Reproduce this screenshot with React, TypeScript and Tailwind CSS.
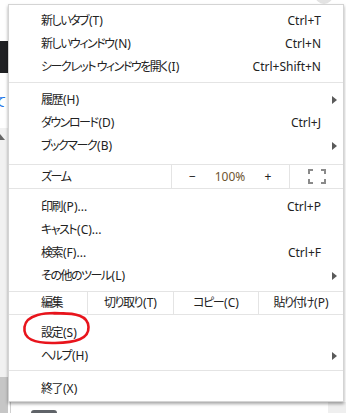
import React from "react";

const font = "[font-family:'Noto_Sans','Noto_Sans_CJK_JP',sans-serif] [font-feature-settings:'palt']";

// kana/kanji part gets tightened, the "(X)" mnemonic keeps normal spacing
function Label({ text }: { text: string }) {
  const m = text.match(/^(.*?)(\(.*)?$/);
  const main = m ? m[1] : text;
  const tail = m && m[2] ? m[2] : "";
  return (
    <span className="whitespace-nowrap">
      <span className="tracking-[-1.5px]">{main}</span>
      {tail && <span className="ml-[1px]">{tail}</span>}
    </span>
  );
}

function Arrow() {
  return (
    <svg width="5" height="8" viewBox="0 0 5 8" className="shrink-0">
      <polygon points="0,0 5,4 0,8" fill="#5a5a5a" />
    </svg>
  );
}

function Item({ label, shortcut, sub }: { label: string; shortcut?: string; sub?: boolean }) {
  return (
    <div className={`flex h-[23px] items-center justify-between pl-[32px] ${sub ? "pr-[6px]" : "pr-[22px]"}`}>
      <Label text={label} />
      {shortcut && <span>{shortcut}</span>}
      {sub && <Arrow />}
    </div>
  );
}

function Sep({ top, bottom }: { top: string; bottom: string }) {
  return (
    <div className={`${top} ${bottom}`}>
      <div className="h-px bg-[#e4e4e4]" />
    </div>
  );
}

function FullscreenIcon() {
  return (
    <svg width="18" height="15" viewBox="0 0 18 15" fill="none" stroke="#8a8a8a" strokeWidth="2">
      <path d="M1 5V1h4M13 1h4v4M17 10v4h-4M5 14H1v-4" />
    </svg>
  );
}

function Menu() {
  return (
    <div className={`absolute left-[8px] top-[4px] w-[336px] border border-[#d4d4d4] bg-white pt-[4px] pb-px text-[12px] text-[#222] shadow-[0_2px_3px_rgba(0,0,0,0.35)] ${font}`}>
      <Item label="新しいタブ(T)" shortcut="Ctrl+T" />
      <Item label="新しいウィンドウ(N)" shortcut="Ctrl+N" />
      <Item label="シークレット ウィンドウを開く(I)" shortcut="Ctrl+Shift+N" />
      <Sep top="pt-[4px]" bottom="pb-[5px]" />
      <Item label="履歴(H)" sub />
      <Item label="ダウンロード(D)" shortcut="Ctrl+J" />
      <Item label="ブックマーク(B)" sub />
      <div className="mt-[7px] flex h-[25px] items-stretch border-y border-[#e4e4e4]">
        <div className="flex w-[162px] items-center pl-[32px]">
          <Label text="ズーム" />
        </div>
        <div className="flex w-[118px] items-center border-l border-[#e4e4e4]">
          <span className="w-[41px] text-center">−</span>
          <span className="w-[34px] text-center text-[#6e5530]">100%</span>
          <span className="w-[42px] text-center">+</span>
        </div>
        <div className="flex flex-1 items-center justify-center border-l border-[#e4e4e4]">
          <FullscreenIcon />
        </div>
      </div>
      <div className="pt-[6px]" />
      <Item label="印刷(P)..." shortcut="Ctrl+P" />
      <Item label="キャスト(C)..." />
      <Item label="検索(F)..." shortcut="Ctrl+F" />
      <Item label="その他のツール(L)" sub />
      <div className="mt-[4px] flex h-[24px] items-stretch border-y border-[#e4e4e4]">
        <div className="flex w-[78px] items-center pl-[32px]">
          <Label text="編集" />
        </div>
        <div className="flex w-[86px] items-center justify-center border-l border-[#e4e4e4]">
          <Label text="切り取り(T)" />
        </div>
        <div className="flex w-[85px] items-center justify-center border-l border-[#e4e4e4]">
          <Label text="コピー(C)" />
        </div>
        <div className="flex flex-1 items-center justify-center border-l border-[#e4e4e4]">
          <Label text="貼り付け(P)" />
        </div>
      </div>
      <div className="pt-[6px]" />
      <Item label="設定(S)" />
      <Item label="ヘルプ(H)" sub />
      <Sep top="pt-[3px]" bottom="pb-[6px]" />
      <Item label="終了(X)" />
    </div>
  );
}

export default function App() {
  return (
    <div className="relative h-[413px] w-[346px] overflow-hidden bg-white">
      {/* page behind the menu */}
      <div className="flex h-full">
        <div className="flex w-[8px] flex-col">
          <div className="h-[41px] bg-white" />
          <div className="h-[32px] bg-[#202124]" />
          <div className={`h-[55px] overflow-hidden bg-white pt-[21px] text-[13px] leading-[14px] text-[#1a73e8] ${font}`}>
            <span className="ml-[-6px]">て</span>
          </div>
          <div className="h-[249px] bg-[#f1f1f1] pt-[6px]">
            <svg width="5" height="6" viewBox="0 0 5 6">
              <polygon points="0,0 5,6 0,6" fill="#666" />
            </svg>
          </div>
          <div className="flex-1 bg-[#c6c6c6]" />
        </div>
        <div className="flex flex-1 flex-col">
          <div className="h-[4px]">
            <div className="ml-[307px] mt-[-14px] h-[18px] w-[18px] rounded-full bg-[#e3e3e3]" />
          </div>
          <div className="flex-1" />
          <div className="flex h-[11px]">
            <div className="ml-[2px] w-px bg-[#d0d0d0]" />
            <div className="flex-1 pl-[20px] pt-[8px]">
              <div className="h-[6px] w-[26px] rounded-[3px] bg-[#5f6368]" />
            </div>
            <div className="w-[18px] bg-[#efefef]" />
          </div>
        </div>
      </div>

      <Menu />

      {/* hand-drawn annotation */}
      <svg className="pointer-events-none absolute left-0 top-0" width="346" height="413" fill="none">
        <path
          d="M66 313.5C44 311.5 26 315 24.5 327C23 339 34 343.5 55 343C76 342.5 89 339 88.5 327C88 316 77 312.5 54 313.5"
          stroke="#e8141c"
          strokeWidth="2.6"
          strokeLinecap="round"
        />
      </svg>
    </div>
  );
}
